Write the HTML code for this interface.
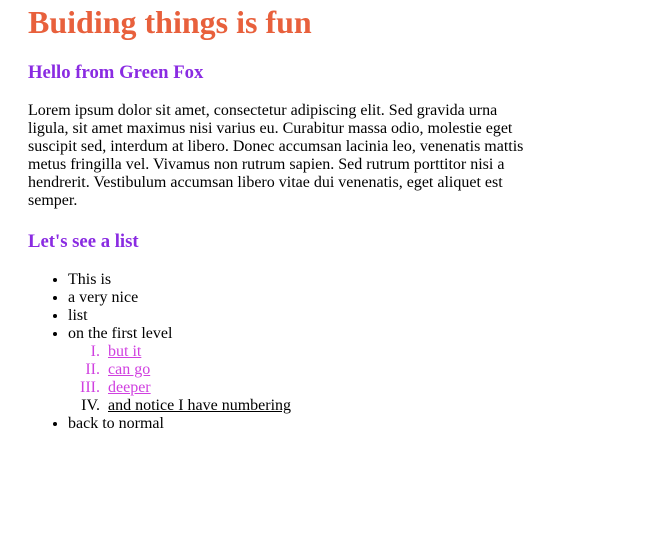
<!DOCTYPE html>
<html><head><style>
body{margin:4px 0 0 28px;width:500px;font-family:"Liberation Serif",serif;font-size:16px;line-height:18px;color:#000;background:#fff}
h1{font-size:32px;line-height:37px;margin:0 0 21px;color:#e8603c}
h2{font-size:18.72px;line-height:22px;margin:0 0 18px;color:#8a2be2}
h2.b{margin-top:21px}
p{margin:0}
ul{margin:0;padding-left:40px}
ol{margin:0;padding-left:40px;list-style:upper-roman}
ol li::marker{content:counter(list-item, upper-roman) ".\00a0\00a0 "}
ol li{color:#d040e0}
ol li a{color:#d040e0;text-decoration:underline}
ol li.k,ol li.k a{color:#000}
</style></head><body>
<h1>Buiding things is fun</h1>
<h2>Hello from Green Fox</h2>
<p>Lorem ipsum dolor sit amet, consectetur adipiscing elit. Sed gravida urna ligula, sit amet maximus nisi varius eu. Curabitur massa odio, molestie eget suscipit sed, interdum at libero. Donec accumsan lacinia leo, venenatis mattis metus fringilla vel. Vivamus non rutrum sapien. Sed rutrum porttitor nisi a hendrerit. Vestibulum accumsan libero vitae dui venenatis, eget aliquet est semper.</p>
<h2 class="b">Let's see a list</h2>
<ul>
<li>This is</li>
<li>a very nice</li>
<li>list</li>
<li>on the first level
<ol>
<li><a>but it</a></li>
<li><a>can go</a></li>
<li><a>deeper</a></li>
<li class="k"><a>and notice I have numbering</a></li>
</ol></li>
<li>back to normal</li>
</ul>
</body></html>
